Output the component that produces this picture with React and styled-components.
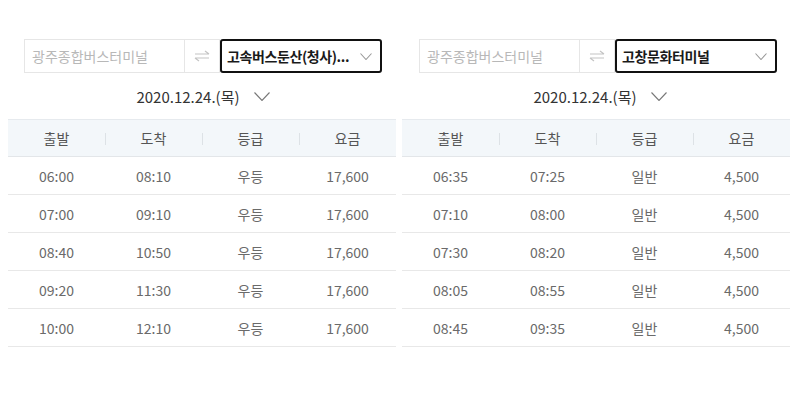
import React from 'react';
import styled, { createGlobalStyle } from 'styled-components';

const GlobalStyle = createGlobalStyle`
  body {
    margin: 0;
    background: #ffffff;
    font-family: 'Noto Sans CJK KR', 'Noto Sans', sans-serif;
  }
`;

const Page = styled.div`
  display: flex;
  gap: 6px;
  padding: 8px;
`;

const Panel = styled.div`
  width: 388px;
  display: flex;
  flex-direction: column;
  align-items: center;
`;

const SearchBar = styled.div`
  display: flex;
  height: 34px;
  margin-top: 31px;
  margin-left: ${props => props.shift || 0}px;
`;

const OriginBox = styled.div`
  width: 161px;
  box-sizing: border-box;
  border: 1px solid #e6e6e6;
  display: flex;
  align-items: center;
  padding-left: 7px;
  font-size: 14px;
  color: #b8b8b8;
`;

const SwapBox = styled.div`
  width: 35px;
  box-sizing: border-box;
  border: 1px solid #e6e6e6;
  border-left: none;
  display: flex;
  align-items: center;
  justify-content: center;
`;

const DestBox = styled.div`
  width: 162px;
  box-sizing: border-box;
  border: 2px solid #111;
  border-radius: 3px;
  display: flex;
  align-items: center;
  justify-content: space-between;
  padding: 0 8px 0 5px;
  font-size: 14px;
  letter-spacing: -0.4px;
  font-weight: 700;
  color: #1a1a1a;
  white-space: nowrap;
`;

const DateRow = styled.div`
  height: 46px;
  display: flex;
  align-items: center;
  gap: 14px;
  font-size: 15px;
  color: #333;
  margin-left: ${props => props.shift || 0}px;
`;

const Table = styled.div`
  width: 100%;
`;

const HeadRow = styled.div`
  display: grid;
  grid-template-columns: repeat(4, 1fr);
  height: 36px;
  background: #f3f7fa;
  border-top: 1px solid #e6eaee;
  border-bottom: 1px solid #e3e6e9;
`;

const HeadCell = styled.div`
  display: flex;
  align-items: center;
  justify-content: center;
  font-size: 14px;
  color: #555;
  position: relative;

  & + &::before {
    content: '';
    position: absolute;
    left: 0;
    top: 13px;
    height: 12px;
    width: 1px;
    background: #dde2e6;
  }
`;

const Row = styled.div`
  display: grid;
  grid-template-columns: repeat(4, 1fr);
  height: 37px;
  border-bottom: 1px solid #e8e8e8;
`;

const Cell = styled.div`
  display: flex;
  align-items: center;
  justify-content: center;
  font-size: 14px;
  color: #6a6a6a;
`;

const SwapIcon = () => (
  <svg width="16" height="12" viewBox="0 0 16 12" fill="none" stroke="#c4c4c4" strokeWidth="1.2">
    <path d="M1 4h14M11 1l4 3" />
    <path d="M15 8H1M5 11L1 8" />
  </svg>
);

const Chevron = ({ w = 12, h = 7, color = '#999' }) => (
  <svg width={w} height={h} viewBox={`0 0 ${w} ${h}`} fill="none" stroke={color} strokeWidth="1.1">
    <path d={`M0.5 0.5L${w / 2} ${h - 0.5}L${w - 0.5} 0.5`} />
  </svg>
);

const panels = [
  {
    dest: '고속버스둔산(청사)...',
    rows: [
      ['06:00', '08:10', '우등', '17,600'],
      ['07:00', '09:10', '우등', '17,600'],
      ['08:40', '10:50', '우등', '17,600'],
      ['09:20', '11:30', '우등', '17,600'],
      ['10:00', '12:10', '우등', '17,600'],
    ],
  },
  {
    dest: '고창문화터미널',
    rows: [
      ['06:35', '07:25', '일반', '4,500'],
      ['07:10', '08:00', '일반', '4,500'],
      ['07:30', '08:20', '일반', '4,500'],
      ['08:05', '08:55', '일반', '4,500'],
      ['08:45', '09:35', '일반', '4,500'],
    ],
  },
];

const heads = ['출발', '도착', '등급', '요금'];

export default function App() {
  return (
    <>
      <GlobalStyle />
      <Page>
        {panels.map((p, i) => (
          <Panel key={i}>
            <SearchBar shift={i === 0 ? 2 : 4}>
              <OriginBox>광주종합버스터미널</OriginBox>
              <SwapBox><SwapIcon /></SwapBox>
              <DestBox>
                <span>{p.dest}</span>
                <Chevron />
              </DestBox>
            </SearchBar>
            <DateRow shift={i === 0 ? 2 : 8}>
              <span>2020.12.24.(목)</span>
              <Chevron w={16} h={9} color="#777" />
            </DateRow>
            <Table>
              <HeadRow>
                {heads.map(h => <HeadCell key={h}>{h}</HeadCell>)}
              </HeadRow>
              {p.rows.map((r, j) => (
                <Row key={j}>
                  {r.map((c, k) => <Cell key={k}>{c}</Cell>)}
                </Row>
              ))}
            </Table>
          </Panel>
        ))}
      </Page>
    </>
  );
}
